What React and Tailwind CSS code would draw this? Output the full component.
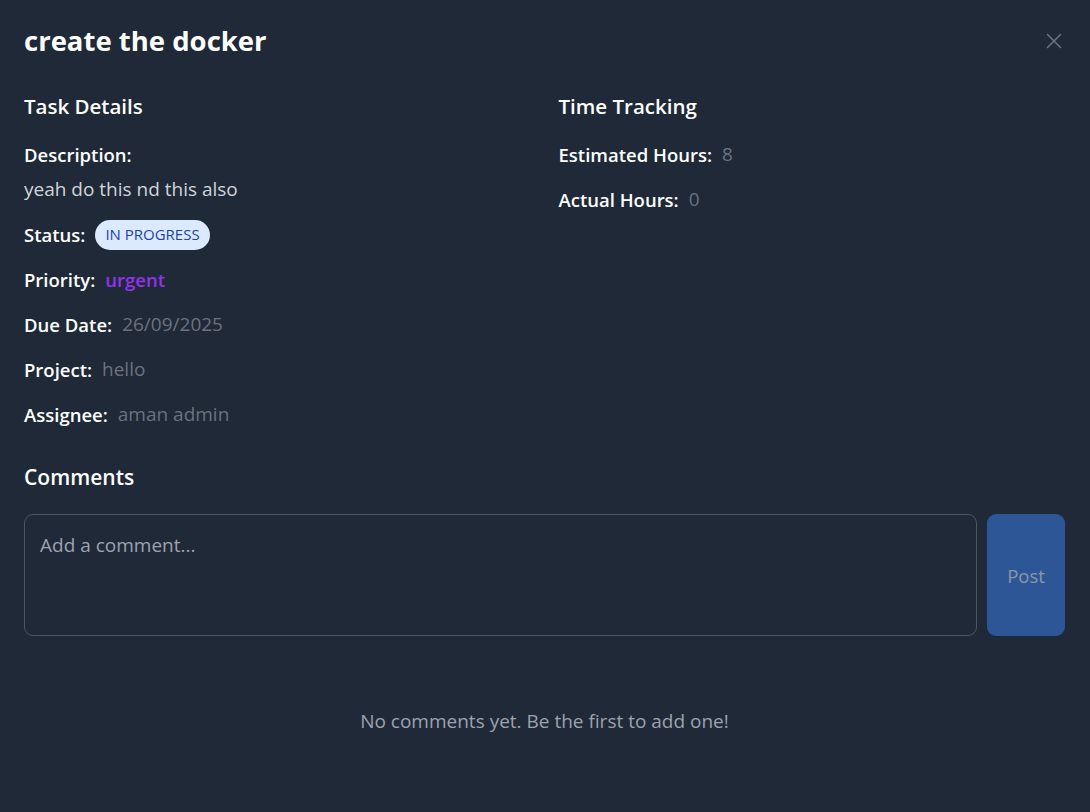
import * as React from "react"
import { X } from "lucide-react"

const details = [
  { label: "Priority:", value: "urgent", className: "text-[#9333ea] font-semibold text-[18.5px]" },
  { label: "Due Date:", value: "26/09/2025", className: "text-[#6b7280]" },
  { label: "Project:", value: "hello", className: "text-[#6b7280]" },
  { label: "Assignee:", value: "aman admin", className: "text-[#6b7280]" },
]

function Row({ label, children }) {
  return (
    <div className="flex h-[27px] items-center gap-[10px]">
      <span className="text-[18.5px] font-semibold text-white">{label}</span>
      {children}
    </div>
  )
}

export default function App() {
  return (
    <div
      className="min-h-[812px] w-full bg-[#1f2937] pl-6 pr-[25px] pt-[23px] pb-10 text-[19px] leading-[27px] text-white"
      style={{ fontFamily: '"Open Sans", "Noto Sans", sans-serif' }}
    >
      <div className="flex h-9 items-center justify-between">
        <h1 className="text-[27.5px] font-bold leading-9">create the docker</h1>
        <button className="-mr-0.5 text-[#6b7280]">
          <X size={26} strokeWidth={1.5} />
        </button>
      </div>

      <div className="mt-[33px] grid grid-cols-2 gap-[28px]">
        <div>
          <h2 className="text-[20.5px] font-semibold leading-7">Task Details</h2>
          <div className="mt-[21px] flex flex-col gap-[18px]">
            <div>
              <div className="text-[18.5px] font-semibold">Description:</div>
              <p className="mt-2 text-[#d1d5db]">yeah do this nd this also</p>
            </div>
            <Row label="Status:">
              <span className="flex h-[30px] items-center rounded-full bg-[#dbeafe] px-[10px] text-[15px] text-[#1e40af]">
                IN PROGRESS
              </span>
            </Row>
            {details.map((d) => (
              <Row key={d.label} label={d.label}>
                <span className={d.className}>{d.value}</span>
              </Row>
            ))}
          </div>
        </div>

        <div>
          <h2 className="text-[20.5px] font-semibold leading-7">Time Tracking</h2>
          <div className="mt-[21px] flex flex-col gap-[18px]">
            <Row label="Estimated Hours:">
              <span className="text-[#6b7280]">8</span>
            </Row>
            <Row label="Actual Hours:">
              <span className="text-[#6b7280]">0</span>
            </Row>
          </div>
        </div>
      </div>

      <h2 className="mt-[35px] text-[21px] font-semibold leading-7">Comments</h2>
      <div className="mt-[23px] flex gap-[10px]">
        <textarea
          className="h-[122px] flex-1 resize-none rounded-[9px] border border-[#4b5563] bg-transparent px-[15px] py-[17px] text-[19px] leading-[27px] text-white outline-none placeholder:text-[#9ca3af]"
          placeholder="Add a comment..."
        />
        <button className="w-[78px] rounded-[9px] bg-[#2d5696] text-[18.5px] text-[#8b97a8]">Post</button>
      </div>

      <p className="mt-[72px] text-center text-[#9ca3af]">
        No comments yet. Be the first to add one!
      </p>
    </div>
  )
}
